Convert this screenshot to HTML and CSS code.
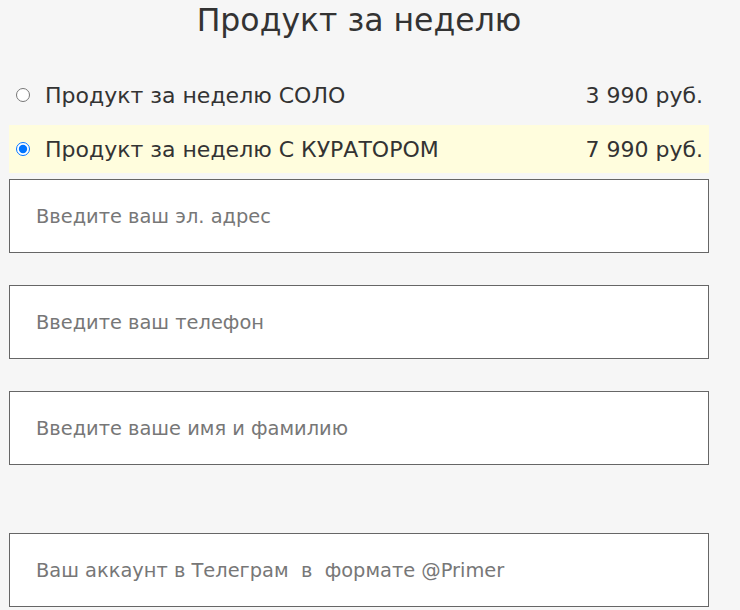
FILE: index.html
```html
<!DOCTYPE html>
<html lang="ru">
<head>
    <meta charset="UTF-8">
    <meta name="viewport" content="width=device-width, initial-scale=1.0">
    <title>Продукт за неделю</title>
    <link rel="stylesheet" href="styles.css">
</head>
<body>
    <div class="order">
        <h1>Продукт за неделю</h1>

        <label class="plan">
            <input type="radio" name="plan" value="solo">
            <span class="plan-name">Продукт за неделю СОЛО</span>
            <span class="plan-price">3 990 руб.</span>
        </label>
        <label class="plan selected">
            <input type="radio" name="plan" value="curator" checked>
            <span class="plan-name">Продукт за неделю С КУРАТОРОМ</span>
            <span class="plan-price">7 990 руб.</span>
        </label>

        <input class="field" type="email" placeholder="Введите ваш эл. адрес">
        <input class="field" type="tel" placeholder="Введите ваш телефон">
        <input class="field" type="text" placeholder="Введите ваше имя и фамилию">
        <input class="field field-wide-gap" type="text" placeholder="Ваш аккаунт в Телеграм  в  формате @Primer">
    </div>
</body>
</html>
```

FILE: styles.css
```css
body {
    font-family: "DejaVu Sans", sans-serif;
    margin: 0;
    padding: 0;
    background-color: #f6f6f6;
    color: #333;
}

.order {
    width: 700px;
    margin-left: 9px;
    display: flex;
    flex-direction: column;
}

h1 {
    margin: 0;
    height: 71px;
    padding-top: 2px;
    box-sizing: border-box;
    text-align: center;
    font-size: 31.5px;
    font-weight: normal;
    color: #333;
}

.plan {
    display: flex;
    align-items: center;
    height: 48px;
    margin-bottom: 6px;
    padding: 0 6px 0 7px;
    font-size: 22px;
    color: #333;
    cursor: pointer;
}

.plan.selected {
    background-color: #fffddd;
}

.plan input {
    margin: 0 15px 0 0;
    width: 14px;
    height: 14px;
}

.plan-name {
    flex: 1;
}

.field {
    height: 74px;
    box-sizing: border-box;
    margin-bottom: 32px;
    padding: 0 26px;
    border: 1px solid #666;
    background: white;
    font-family: "DejaVu Sans", sans-serif;
    font-size: 19.4px;
    color: #333;
    outline: none;
}

.field::placeholder {
    color: #777;
}

.field-wide-gap {
    margin-top: 36px;
}
```
